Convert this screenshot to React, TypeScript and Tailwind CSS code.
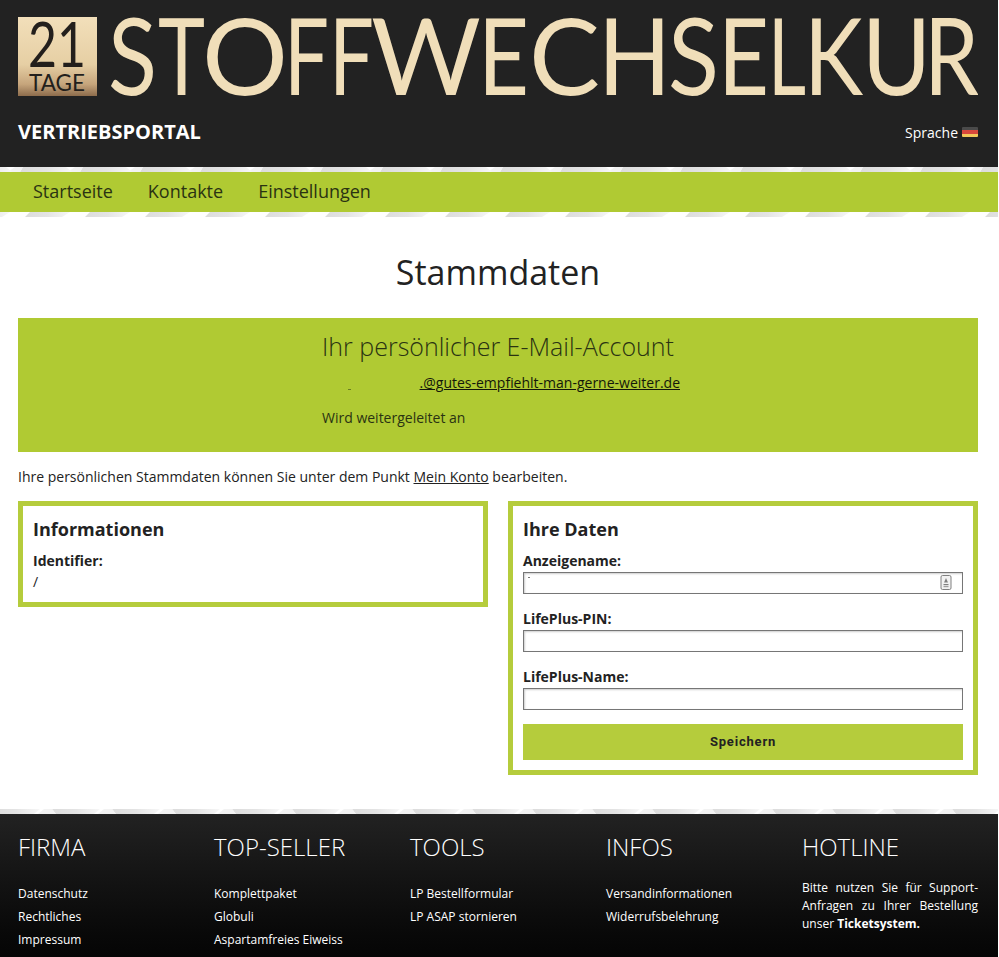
import React from 'react';

// x / w = where the letter's ink sits in the logo, lb / rb = side bearings of the font
const LETTERS = [
  { c: 'S', x: 110, w: 45, lb: 2, rb: 2 },
  { c: 'T', x: 159, w: 45, lb: 1, rb: 1 },
  { c: 'O', x: 207, w: 76, lb: 5, rb: 5 },
  { c: 'F', x: 293, w: 33, lb: 9, rb: 3 },
  { c: 'F', x: 338, w: 33, lb: 9, rb: 3 },
  { c: 'W', x: 372, w: 108, lb: 1, rb: 1 },
  { c: 'E', x: 487, w: 38, lb: 9, rb: 4 },
  { c: 'C', x: 533, w: 64, lb: 4, rb: 3 },
  { c: 'H', x: 607, w: 55, lb: 9, rb: 9 },
  { c: 'S', x: 670, w: 47, lb: 2, rb: 2 },
  { c: 'E', x: 727, w: 38, lb: 9, rb: 4 },
  { c: 'L', x: 777, w: 28, lb: 9, rb: 1 },
  { c: 'K', x: 813, w: 50, lb: 9, rb: 0 },
  { c: 'U', x: 870, w: 53, lb: 8, rb: 8 },
  { c: 'R', x: 933, w: 45, lb: 9, rb: 1 },
];

function Logo() {
  return (
    <svg width="960" height="80" viewBox="18 17 960 80" className="block" role="img" aria-label="21 Tage Stoffwechselkur">
      <defs>
        <linearGradient id="tile" x1="0" y1="0" x2="0" y2="1">
          <stop offset="0" stopColor="#f2dfba" />
          <stop offset="0.6" stopColor="#e6cfa4" />
          <stop offset="0.85" stopColor="#c6a57c" />
          <stop offset="1" stopColor="#8d6c4c" />
        </linearGradient>
      </defs>
      <rect x="18" y="17" width="79" height="79" fill="url(#tile)" />
      <text x="28" y="67" textLength="58" lengthAdjust="spacingAndGlyphs" fontFamily="Lato" fontWeight="400" fontSize="62" fill="#231f1c">21</text>
      <text x="29" y="91" textLength="56" lengthAdjust="spacingAndGlyphs" fontFamily="Lato" fontWeight="400" fontSize="24" fill="#231f1c">TAGE</text>
      {LETTERS.map((l, i) => (
        <text key={i} x={l.x - l.lb} y="95" textLength={l.w + l.lb + l.rb} lengthAdjust="spacingAndGlyphs" fontFamily="Lato" fontSize="107" fill="#f0deb9">
          {l.c}
        </text>
      ))}
    </svg>
  );
}

const STRIPS = {
  top: { band: '23,0 66,0 72,5 20,5', spot: '8,5 15,0 23,0 20,5' },
  under: { band: '30,0 70,0 62,5 25,5', spot: '' },
  foot: { band: '52,0 100,0 94,5 56,5', spot: '38,5 44,0 52,0 56,5' },
};

function Strip({ kind }: { kind: 'top' | 'under' | 'foot' }) {
  const { band, spot } = STRIPS[kind];
  return (
    <svg width="100%" height="5" className="block">
      <defs>
        <linearGradient id={`band-${kind}`} x1="0" y1="0" x2="1" y2="0">
          <stop offset="0" stopColor="#dcdcdc" />
          <stop offset="0.5" stopColor="#e4e4e4" />
          <stop offset="1" stopColor="#f7f7f7" />
        </linearGradient>
        <pattern id={`strip-${kind}`} width="60" height="5" patternUnits="userSpaceOnUse">
          <rect width="60" height="5" fill="#ffffff" />
          {[0, -60].map((dx) => (
            <g key={dx} transform={`translate(${dx} 0)`}>
              <polygon points={band} fill={`url(#band-${kind})`} />
              {spot && <polygon points={spot} fill="#f2f2f2" />}
            </g>
          ))}
        </pattern>
      </defs>
      <rect width="100%" height="5" fill={`url(#strip-${kind})`} />
    </svg>
  );
}

function Flag() {
  return (
    <span className="inline-flex h-[10px] w-[16px] flex-col overflow-hidden rounded-[1px]">
      <span className="h-1/3 bg-[#4a4a4a]" />
      <span className="h-1/3 bg-[#d8483c]" />
      <span className="h-1/3 bg-[#f2c85a]" />
    </span>
  );
}

function Field({ label, icon }: { label: string; icon?: boolean }) {
  return (
    <div className="mb-[14px]">
      <label className="block h-[22px] text-[14px] leading-[22px] font-bold">{label}</label>
      <div className="relative h-[22px] border border-[#767676] bg-white shadow-[inset_1px_1px_2px_rgba(0,0,0,0.2)]">
        {icon && (
          <>
            <span className="absolute left-[4px] top-[4px] h-px w-[2px] bg-[#777]" />
            <svg width="12" height="15" viewBox="0 0 12 15" className="absolute right-[10px] top-[2px]">
              <rect x="1" y="0.5" width="10" height="14" rx="1.5" fill="#f2f2f2" stroke="#808080" />
              <path d="M6 3 L8 7.5 H4 Z" fill="#808080" />
              <rect x="3.5" y="9" width="5" height="1.2" fill="#808080" />
              <rect x="3.5" y="11" width="5" height="1.2" fill="#a0a0a0" />
            </svg>
          </>
        )}
      </div>
    </div>
  );
}

const FOOTER = [
  { title: 'FIRMA', links: ['Datenschutz', 'Rechtliches', 'Impressum'] },
  { title: 'TOP-SELLER', links: ['Komplettpaket', 'Globuli', 'Aspartamfreies Eiweiss'] },
  { title: 'TOOLS', links: ['LP Bestellformular', 'LP ASAP stornieren'] },
  { title: 'INFOS', links: ['Versandinformationen', 'Widerrufsbelehrung'] },
];

export default function App() {
  return (
    <div className="h-[957px] w-[998px] overflow-hidden bg-white font-['Open_Sans',sans-serif] text-[#222]">
      <header className="h-[167px] bg-[#222222] pl-[18px] pr-[20px] pt-[17px]">
        <Logo />
        <div className="mt-[19px] flex items-center justify-between">
          <span className="text-[20px] leading-[32px] font-bold text-white">VERTRIEBSPORTAL</span>
          <span className="flex items-center gap-1 text-[14px] text-white">
            Sprache <Flag />
          </span>
        </div>
      </header>
      <Strip kind="top" />
      <nav className="flex h-[40px] items-center gap-[35px] bg-[#b0ca33] px-[33px] pb-[2px] text-[18px] text-[#2a3312]">
        <a href="#">Startseite</a>
        <a href="#">Kontakte</a>
        <a href="#">Einstellungen</a>
      </nav>
      <Strip kind="under" />

      <main className="h-[592px] pl-[18px] pr-[20px]">
        <h1 className="pt-[33px] pb-[23px] text-center text-[34px] leading-[45px] font-normal">Stammdaten</h1>
        <section className="h-[134px] bg-[#b0ca33] pt-[11px] text-[#2a3312]">
          <h2 className="text-center text-[25px] leading-[35px] font-light">Ihr persönlicher E-Mail-Account</h2>
          <div className="ml-[304px] w-[358px]">
            <div className="relative mt-[9px] h-[20px] text-right text-[14px] leading-[20px]">
              <span className="absolute left-[26px] top-[16px] h-px w-[3px] bg-[#6a7d20]" />
              <a href="#" className="text-[#14180a] underline">.@gutes-empfiehlt-man-gerne-weiter.de</a>
            </div>
            <p className="mt-[15px] text-[14px] leading-[20px]">Wird weitergeleitet an</p>
          </div>
        </section>
        <p className="mt-[15px] text-[14px] leading-[20px]">
          Ihre persönlichen Stammdaten können Sie unter dem Punkt{' '}
          <a href="#" className="underline">Mein Konto</a> bearbeiten.
        </p>
        <div className="mt-[14px] grid grid-cols-2 items-start gap-5">
          <div className="h-[106px] border-[5px] border-[#b5cc3c] px-[10px] pt-[9px]">
            <h3 className="text-[18px] leading-[28px] font-bold">Informationen</h3>
            <div className="mt-[8px] text-[14px] leading-[20px] font-bold">Identifier:</div>
            <div className="mt-[1px] text-[14px] leading-[20px]">/</div>
          </div>
          <form className="h-[274px] border-[5px] border-[#b5cc3c] px-[10px] pt-[9px]">
            <h3 className="mb-[7px] text-[18px] leading-[28px] font-bold">Ihre Daten</h3>
            <Field label="Anzeigename:" icon />
            <Field label="LifePlus-PIN:" />
            <Field label="LifePlus-Name:" />
            <button type="button" className="block h-[36px] w-full bg-[#b5cc3c] font-['Roboto',sans-serif] text-[13px] font-bold tracking-[0.8px] text-[#222]">
              Speichern
            </button>
          </form>
        </div>
      </main>

      <Strip kind="foot" />
      <footer className="h-[143px] bg-linear-to-b from-[#222222] to-[#050505] pl-[18px] pr-[20px] pt-[16px] text-white">
        <div className="grid grid-cols-5 gap-5">
          {FOOTER.map((col) => (
            <div key={col.title}>
              <h4 className="text-[24px] leading-[34px] font-light">{col.title}</h4>
              <ul className="mt-[18px] text-[12px] leading-[23px]">
                {col.links.map((link) => (
                  <li key={link}><a href="#">{link}</a></li>
                ))}
              </ul>
            </div>
          ))}
          <div>
            <h4 className="text-[24px] leading-[34px] font-light">HOTLINE</h4>
            <p className="mt-[15px] text-justify text-[12px] leading-[18px]">
              Bitte nutzen Sie für Support-Anfragen zu Ihrer Bestellung unser <b className="font-bold">Ticketsystem.</b>
            </p>
          </div>
        </div>
      </footer>
    </div>
  );
}
